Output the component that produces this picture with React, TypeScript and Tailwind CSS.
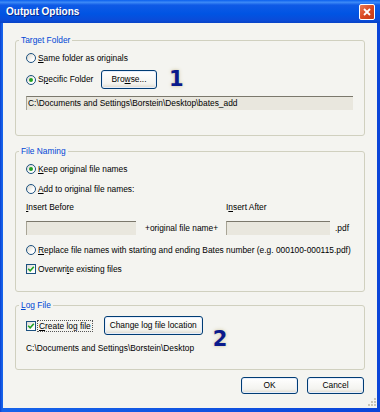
import React from "react";

function Radio({ checked }: { checked?: boolean }) {
  return (
    <span className="w-[10px] h-[10px] rounded-full border border-[#1c5180] bg-[linear-gradient(135deg,#d8d6cc,#ffffff_70%)] flex items-center justify-center shrink-0">
      {checked && <span className="w-[4px] h-[4px] rounded-full bg-[#21a121]"></span>}
    </span>
  );
}

function Check() {
  return (
    <span className="w-[10px] h-[10px] border border-[#1c5180] bg-[linear-gradient(135deg,#dcdad0,#ffffff_70%)] flex items-center justify-center shrink-0">
      <svg width="8" height="8" viewBox="0 0 8 8">
        <path d="M1.2 3.8 L3.2 5.8 L6.8 1.8" stroke="#21a121" strokeWidth="1.6" fill="none" />
      </svg>
    </span>
  );
}

function Btn({ children, w }: { children: React.ReactNode; w: string }) {
  return (
    <button
      className={`${w} h-full border border-[#003c74] rounded-[3px] bg-[linear-gradient(to_bottom,#ffffff,#f3f3ef_75%,#dcd8cc)] shadow-[inset_0_0_0_1px_#e6eefc] flex items-center justify-center text-black`}
    >
      {children}
    </button>
  );
}

function Group({ title, children }: { title: React.ReactNode; children: React.ReactNode }) {
  return (
    <fieldset className="border border-[#d0d0bf] rounded-[3px] min-w-0">
      <legend className="ml-[3px] px-[2px] leading-[11px] text-[#0046d5]">{title}</legend>
      {children}
    </fieldset>
  );
}

function Sunken({ w, children }: { w: string; children?: React.ReactNode }) {
  return (
    <div className={`${w} h-[14px] bg-[#e9e7de] border-t border-l border-t-[#7b786c] border-l-[#a8a596] flex items-center pl-[1px] leading-[11px]`}>
      {children}
    </div>
  );
}

const num =
  "font-['DejaVu_Sans',sans-serif] text-[21px] font-bold leading-none text-[#0a1a8c] [text-shadow:0_0_2px_#d8d2b4,0_0_4px_#d8d2b4]";

export default function App() {
  return (
    <div className="w-[380px] h-[412px] flex flex-col bg-[#0b45d8] font-['Liberation_Sans',Arial,sans-serif] text-[8.4px] text-black overflow-hidden">
      {/* title bar */}
      <div className="h-[23px] shrink-0 flex items-center justify-between pl-[6px] pr-[5px] bg-[linear-gradient(to_bottom,#0a5fee,#3d8af7_10%,#0f5ae6_22%,#0054e3_60%,#0a4bd8_88%,#0843c6)]">
        <span className="text-white font-bold text-[10px] [text-shadow:1px_1px_0_#0a2a8c]">Output Options</span>
        <span className="w-[16px] h-[16px] rounded-[2px] border border-white bg-[linear-gradient(135deg,#eb7a55,#d8461f_55%,#c23a17)] flex items-center justify-center">
          <svg width="10" height="10" viewBox="0 0 10 10">
            <path d="M2 2 L8 8 M8 2 L2 8" stroke="#fff" strokeWidth="1.8" />
          </svg>
        </span>
      </div>

      <div className="flex-1 flex px-[3px] pb-[4px] bg-[linear-gradient(to_right,#0a3fd0,#1663ea_2px,#0b45d8)]">
        <div className="flex-1 bg-[#f4f4f0] flex flex-col pt-[12px] px-[12px]">
          <Group title="Target Folder">
            <div className="flex flex-col pl-[10px] pr-[11px] pt-[5px] pb-[25px]">
              <div className="h-[14px] flex items-center gap-[2px]">
                <Radio />
                <span><u>S</u>ame folder as originals</span>
              </div>
              <div className="mt-[5px] h-[19px] flex items-center">
                <Radio checked />
                <span className="ml-[2px] w-[63px]">S<u>p</u>ecific Folder</span>
                <div className="h-[19px]">
                  <Btn w="w-[56px]">
                    Bro<u>w</u>se...
                  </Btn>
                </div>
                <span className={`ml-[12px] ${num}`}>1</span>
              </div>
              <div className="mt-[7px]">
                <Sunken w="w-full">C:\Documents and Settings\Borstein\Desktop\bates_add</Sunken>
              </div>
            </div>
          </Group>

          <div className="mt-[10px]">
            <Group title="File Naming">
              <div className="flex flex-col pl-[10px] pr-[11px] pt-[5px] pb-[15px]">
                <div className="h-[14px] flex items-center gap-[2px]">
                  <Radio checked />
                  <span><u>K</u>eep original file names</span>
                </div>
                <div className="mt-[6px] h-[14px] flex items-center gap-[2px]">
                  <Radio />
                  <span><u>A</u>dd to original file names:</span>
                </div>
                <div className="mt-[6px] h-[11px] flex items-center leading-[11px]">
                  <span className="w-[200px]"><u>I</u>nsert Before</span>
                  <span>I<u>n</u>sert After</span>
                </div>
                <div className="mt-[8px] h-[14px] flex items-center">
                  <Sunken w="w-[110px]" />
                  <span className="ml-[9px] w-[81px]">+original file name+</span>
                  <Sunken w="w-[104px]" />
                  <span className="ml-[5px]">.pdf</span>
                </div>
                <div className="mt-[8px] h-[14px] flex items-center gap-[2px]">
                  <Radio />
                  <span><u>R</u>eplace file names with starting and ending Bates number (e.g. 000100-000115.pdf)</span>
                </div>
                <div className="mt-[5px] h-[14px] flex items-center gap-[2px]">
                  <Check />
                  <span>Overwri<u>t</u>e existing files</span>
                </div>
              </div>
            </Group>
          </div>

          <div className="mt-[8px]">
            <Group title={<><u>L</u>og File</>}>
              <div className="flex flex-col pl-[10px] pr-[11px] pt-[5px] pb-[15px]">
                <div className="h-[19px] flex items-start">
                  <div className="h-[19px] flex items-center">
                    <Check />
                    <span className="ml-[1px] px-[1px] border border-dotted border-[#555] leading-[10px]"><u>C</u>reate log file</span>
                  </div>
                  <div className="ml-[11px] h-[19px]">
                    <Btn w="w-[99px]">Change log file location</Btn>
                  </div>
                  <span className={`ml-[10px] mt-[13px] ${num}`}>2</span>
                </div>
                <div className="mt-[8px] h-[11px] leading-[11px]">C:\Documents and Settings\Borstein\Desktop</div>
              </div>
            </Group>
          </div>

          <div className="mt-[7px] h-[17px] flex justify-end gap-[9px] pr-[1px]">
            <Btn w="w-[57px]">OK</Btn>
            <Btn w="w-[57px]">Cancel</Btn>
          </div>
          <div className="flex-1 flex justify-end items-end pb-[2px] -mr-[11px]">
            <svg width="8" height="8" viewBox="0 0 8 8">
              <rect x="6" y="0" width="2" height="2" fill="#c8c5b8" />
              <rect x="3" y="3" width="2" height="2" fill="#c8c5b8" />
              <rect x="6" y="3" width="2" height="2" fill="#c8c5b8" />
              <rect x="0" y="6" width="2" height="2" fill="#c8c5b8" />
              <rect x="3" y="6" width="2" height="2" fill="#c8c5b8" />
              <rect x="6" y="6" width="2" height="2" fill="#c8c5b8" />
            </svg>
          </div>
        </div>
      </div>
    </div>
  );
}
